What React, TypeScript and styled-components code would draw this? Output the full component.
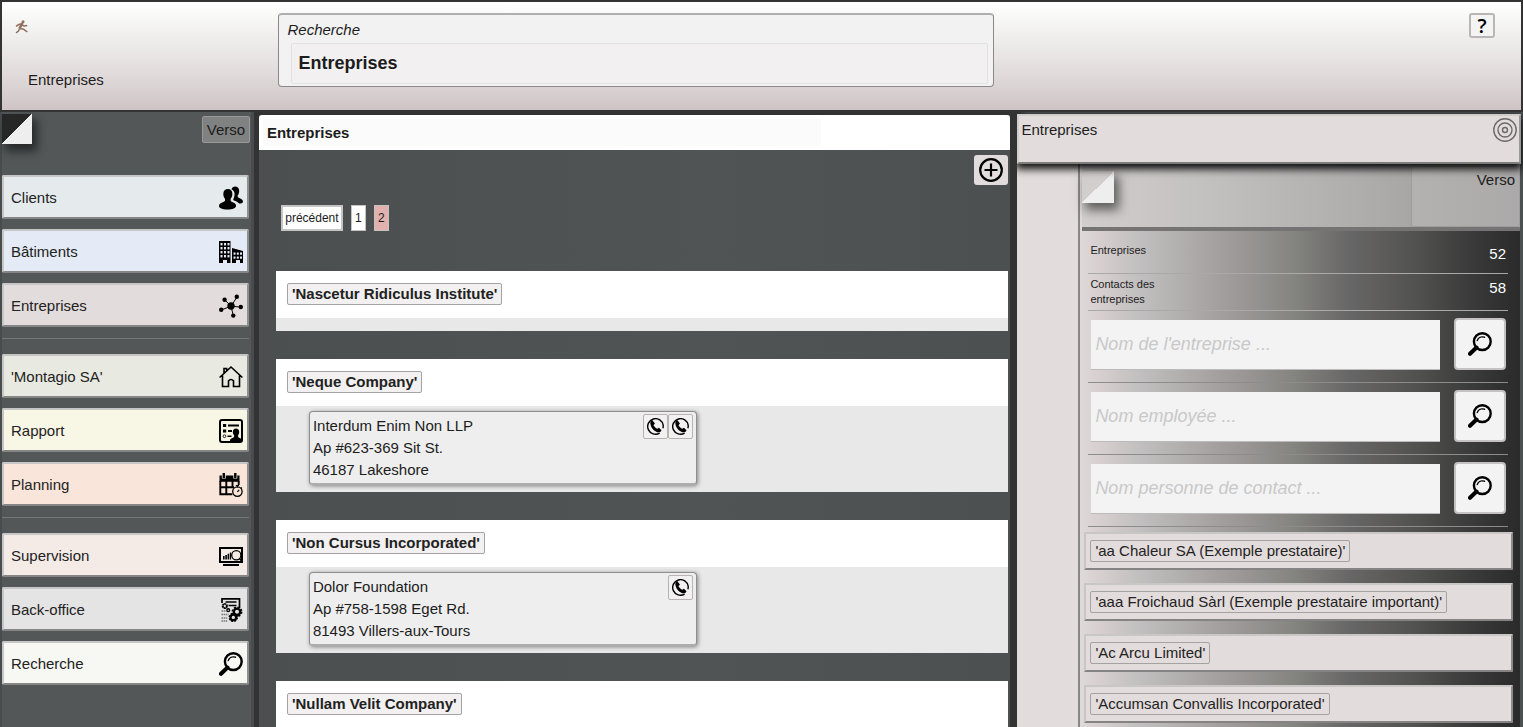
import React from 'react';
import styled, { createGlobalStyle } from 'styled-components';

const GlobalStyle = createGlobalStyle`
  *, *::before, *::after { box-sizing: border-box; }
  body {
    margin: 0;
    background: #333;
    color: #1c1c1c;
    font: 15px/22px "Liberation Sans", Arial, sans-serif;
  }
  button, input { font: inherit; color: inherit; margin: 0; padding: 0; }
  button { cursor: pointer; }
  h1, h2, p, ul, dl, dd { margin: 0; padding: 0; font-size: inherit; font-weight: inherit; }
  ul { list-style: none; }
  svg { display: block; }
`;

const Page = styled.div`
  display: flex;
  flex-direction: column;
  height: 100vh;
  overflow: hidden;
`;

/* ---------- top banner ---------- */

const Banner = styled.header`
  flex: none;
  display: grid;
  grid-template-columns: 18.2% 47.1% 1fr;
  height: 112px;
  border: 2px solid #333;
  background: linear-gradient(#fff, #eeedeb 35%, #e0dada 68%, #cfc4c5);
`;

const Brand = styled.div`
  display: flex;
  flex-direction: column;
  justify-content: space-between;
  padding: 18px 0 19px 13px;
`;

const BrandName = styled.h1`
  padding-left: 13px;
`;

const SearchBox = styled.section`
  margin-top: 11px;
  height: 74px;
  padding: 4px 5px 2px 8px;
  border: 1px solid #8a8888;
  border-top: 2px solid #b0aeae;
  border-radius: 4px;
  background: #f2f2f2;
`;

const SearchTitle = styled.p`
  font-style: italic;
`;

const SearchValue = styled.p`
  margin: 2px 0 0 4px;
  padding: 0 6px;
  border: 1px solid #e4e1e1;
  border-radius: 2px;
  background: #f2f0f0;
  font-size: 18px;
  font-weight: bold;
  line-height: 39px;
`;

const HelpButton = styled.button`
  justify-self: end;
  width: 26px;
  height: 25px;
  margin: 11px 26px 0 0;
  border: 2px solid #bbb6b6;
  border-radius: 3px;
  background: #f5f4f4;
  font: 600 20px/20px "Open Sans", "Noto Sans", sans-serif;
  color: #000;
`;

/* ---------- body columns ---------- */

const Columns = styled.div`
  flex: 1;
  min-height: 0;
  display: grid;
  grid-template-columns: 17% minmax(0, 1fr) 33.2%;
`;

const Sidebar = styled.nav`
  margin-right: 5px;
  padding: 2px 5px 0 2px;
  background: linear-gradient(90deg, #484c4c 2px, #535757 2px, #535757 calc(100% - 3px), #484c4c calc(100% - 3px));
  overflow: hidden;
`;

const SidebarTop = styled.div`
  display: flex;
  justify-content: space-between;
  height: 61px;
`;

const Fold = styled.span<{ $from: string; $size: number }>`
  width: ${p => p.$size}px;
  height: ${p => p.$size}px;
  background: linear-gradient(135deg, ${p => p.$from} 50%, #eee 50%);
  box-shadow: 4px 6px 10px 1px rgba(0, 0, 0, 0.55);
`;

const SideVerso = styled.button`
  width: 48px;
  height: 27px;
  margin: 2px -1px 0 0;
  border: 1px solid #999;
  border-radius: 2px;
  background: #808282;
`;

const NavList = styled.ul`
  display: flex;
  flex-direction: column;
  gap: 10px;
`;

const NavButton = styled.button<{ $tone: string }>`
  display: flex;
  align-items: center;
  justify-content: space-between;
  width: 100%;
  height: 44px;
  padding: 2px 4px 0 7px;
  border: 2px solid;
  border-color: #c6c6c6 #8f8f8f #858585 #c6c6c6;
  border-radius: 2px;
  background: ${p => p.$tone};
  color: #222;
`;

const NavRule = styled.hr`
  margin: 11px 0 15px;
  border: 0;
  border-top: 1px solid #747878;
`;

/* ---------- centre list ---------- */

const Center = styled.main`
  margin: 3px 7px 0 0;
  background: linear-gradient(90deg, #4b4f4f, #505454 60%, #4c5050);
  overflow: hidden;
`;

const CenterTitle = styled.h2`
  height: 35px;
  padding: 4px;
  border-radius: 3px 3px 0 0;
  background: #fff;
  font-weight: bold;
`;

const CenterTitleText = styled.span`
  display: block;
  width: 75%;
  padding: 0 4px;
  background: #fbfbfb;
  line-height: 27px;
`;

const AddRow = styled.div`
  display: flex;
  justify-content: flex-end;
  padding: 5px 2px 0;
`;

const AddButton = styled.button`
  display: grid;
  place-items: center;
  width: 34px;
  height: 30px;
  border: 0;
  border-radius: 3px;
  background: #e2dcdc;
`;

const Pager = styled.nav`
  display: flex;
  gap: 8px;
  padding: 20px 22px 40px;
`;

const PageButton = styled.button<{ $current?: boolean; $wide?: boolean }>`
  height: 26px;
  width: ${p => (p.$wide ? 62 : 15)}px;
  border: ${p => (p.$wide ? 2 : 1)}px solid #c4c4c4;
  background: ${p => (p.$current ? '#e3b1ad' : '#fff')};
  font-size: 12px;
  line-height: 20px;
  white-space: nowrap;
`;

const Companies = styled.ul`
  display: flex;
  flex-direction: column;
  gap: 28px;
  padding: 0 2px 0 17px;
`;

const CompanyHead = styled.div`
  padding: 12px 11px;
  height: 47px;
  background: #fff;
`;

const CompanyBody = styled.div`
  min-height: 13px;
  background: #e8e8e8;
`;

const Tag = styled.button<{ $bold?: boolean }>`
  height: 22px;
  padding: 0 4px;
  border: 1px solid #a5a2a2;
  border-radius: 2px;
  background: ${p => (p.$bold ? '#f2f0f0' : 'transparent')};
  color: #222;
  font-weight: ${p => (p.$bold ? 'bold' : 'normal')};
  line-height: 20px;
  white-space: nowrap;
`;

const AddressWrap = styled.div`
  padding: 5px 33px 7px;
`;

const AddressCard = styled.article`
  display: flex;
  justify-content: space-between;
  width: 388px;
  max-width: 100%;
  height: 74px;
  padding: 3px 3px 0;
  border: 1px solid #8f8f8f;
  border-bottom: 2px solid #adadad;
  border-radius: 4px;
  background: #eee;
  box-shadow: 1px 1px 4px rgba(0, 0, 0, 0.45);
`;

const Phones = styled.div`
  display: flex;
`;

const PhoneButton = styled.button`
  display: grid;
  place-items: center;
  width: 25px;
  height: 25px;
  margin-top: -1px;
  border: 1px solid #b8b2b2;
  border-radius: 2px;
  background: #f2f0f0;
`;

/* ---------- right pane ---------- */

const Pane = styled.aside`
  display: flex;
  flex-direction: column;
  min-height: 0;
  padding: 2px 3px 0 0;
  background: linear-gradient(90deg, #383838, #4b5050 10px);
  overflow: hidden;
`;

const PaneHead = styled.header`
  flex: none;
  position: relative;
  display: flex;
  justify-content: space-between;
  height: 50px;
  margin-right: -1px;
  padding: 3px 2px;
  border: 2px solid;
  border-color: #cfcccc #999 #7d7d7d #cfcccc;
  background: #e2dcdc;
  box-shadow: 0 4px 8px 1px rgba(0, 0, 0, 0.95);
`;

const TargetButton = styled.button`
  width: 24px;
  height: 24px;
  margin-top: -1px;
  border: 0;
  background: none;
`;

const PaneBody = styled.div`
  flex: 1;
  min-height: 0;
  display: grid;
  grid-template-columns: 61px minmax(0, 1fr);
  background: #e2dcdc;
`;

const Sheet = styled.div`
  grid-column: 2;
  border-left: 2px solid #888;
  background: linear-gradient(90deg, #dfd9d9 0%, #d8d0d0 4%, #c0bebe 14%, #a29d9d 33%, #858581 48%, #686767 61%, #525250 76%, #3c3c3c 88%, #2b2a2a 100%);
`;

const SheetHead = styled.div`
  display: flex;
  justify-content: space-between;
  height: 67px;
  margin-left: 2px;
  padding-top: 2px;
  border-bottom: 4px solid #757373;
  background: linear-gradient(90deg, #d3cece, #c2bfbf 30%, #a9a6a6 75%, #aaa7a7);
`;

const SheetFold = styled(Fold)`
  margin-top: 5px;
`;

const SheetVerso = styled.button`
  display: flex;
  justify-content: flex-end;
  width: 25%;
  padding: 2px 4px 0 0;
  border: 1px solid #a09d9d;
  border-radius: 2px;
  background: linear-gradient(90deg, #b3b2b0, #aba9a9);
`;

const Facts = styled.dl`
  margin: 0 12px 0 8px;
`;

const Fact = styled.div<{ $tall?: boolean }>`
  display: flex;
  justify-content: space-between;
  height: ${p => (p.$tall ? 43 : 37)}px;
  padding: ${p => (p.$tall ? 12 : 3)}px 2px 0;
  border-bottom: 1px solid #aaa8a8;
`;

const FactName = styled.dt`
  width: 80px;
  font-size: 11px;
  line-height: 15px;
`;

const FactValue = styled.dd`
  color: #fff;
`;

const Finder = styled.form`
  display: flex;
  justify-content: space-between;
  height: 72px;
  margin: 0 12px 0 8px;
  padding: 7px 2px 0 3px;
  border-bottom: 1px solid #8d8b8b;
`;

const FinderInput = styled.input`
  width: 84%;
  height: 50px;
  margin-top: 2px;
  padding: 0 4px;
  border: 0;
  border-bottom: 1px solid #bbb;
  border-radius: 0;
  background: #f3f3f3;
  font-size: 18px;
  &::placeholder { color: #c8c8c8; font-style: italic; opacity: 1; }
`;

const FinderButton = styled.button`
  display: grid;
  place-items: center;
  width: 52px;
  height: 52px;
  border: 2px solid #c4c2c2;
  border-radius: 4px;
  background: #f3f3f3;
`;

const Results = styled.ul`
  display: flex;
  flex-direction: column;
  gap: 13px;
  padding: 5px 7px 0 4px;
`;

const Result = styled.li`
  display: flex;
  height: 38px;
  padding: 6px 4px;
  border: 2px solid;
  border-color: #c9c6c6 #8c8a8a #858383 #c9c6c6;
  border-radius: 1px;
  background: #e2dcdc;
`;

/* ---------- drawings ---------- */

const Icon = ({ size = 24, box = 24, children }: { size?: number; box?: number; children: React.ReactNode }) => (
  <svg width={size} height={size} viewBox={`0 0 ${box} ${box}`} aria-hidden="true" fill="#000">
    {children}
  </svg>
);

const Runner = () => (
  <svg width="13" height="14" viewBox="0 0 13 14" aria-hidden="true" fill="none" stroke="#8f6f5c" strokeLinejoin="round">
    <circle cx="8" cy="1.700" r="1.500" fill="#8f6f5c" stroke="none" />
    <path d="M7.500 3 4.500 8.500" strokeWidth="2.600" />
    <path d="M6.500 3.800 3.800 4.500 1 6.300M7 5l2.200 1 3-.6M4.800 8.500l4 .8L12.300 12M4.500 8.500l-1 2.500L1 12.800" strokeWidth="1.500" />
  </svg>
);

const ClientsIcon = () => (
  <Icon>
    <path d="M16.200.6c2.400 0 4 1.800 4 4.300 0 1.900-.7 3.500-1.500 4.500-.2 1.300.2 2 1.500 2.500 2.300.8 3.800 1.900 3.800 3.500 0 1.500-1.300 2.100-3.800 2.100-1.800-2.100-4.400-2.500-5.700-3.200-.4-.7-.1-1.500.3-2.200 1.500-3.800 1-7.200-2.300-8.800.6-1.600 1.900-2.700 3.700-2.700z" />
    <path d="M8.900 3.100c2.700 0 4.500 2 4.500 4.800 0 2-.8 3.700-1.700 4.800-.3 1.800 0 2.800 1.500 3.300 2.400.8 3.900 1.800 3.900 3.800 0 2.300-3.500 3.700-8.600 3.700S0 22.200 0 20c0-2 1.800-3.100 4.400-3.900 1.500-.5 1.900-1.500 1.600-3.300-.9-1.100-1.700-2.900-1.700-4.900 0-2.800 1.900-4.800 4.600-4.800z" />
  </Icon>
);

const BuildingsIcon = () => (
  <Icon>
    <path d="M0 1h11.500v22H8v-3H4v3H0zM13 8l11 3v12h-3v-3h-4v3h-4z" />
    <g fill="#e5ecf7">
      {[3, 7, 11, 15].map(y => [1.500, 5, 8.500].map(x => <rect key={`${x}-${y}`} x={x} y={y} width="2" height="2.400" />))}
      {[12.500, 16.500].map(y => [14.500, 17.800, 21].map(x => <rect key={`${x}-${y}`} x={x} y={y} width="2" height="2.200" />))}
    </g>
  </Icon>
);

const NetworkIcon = () => (
  <Icon>
    <path d="M12 12.200 5.500 5.500M12 12.200 18 3M12 12.200l10 .9M12 12.200 2.200 16M12 12.200l2.300 9.300" stroke="#000" strokeWidth="1" />
    <circle cx="12" cy="12" r="3.700" />
    <circle cx="5.600" cy="5.800" r="2.200" />
    <circle cx="17.800" cy="2.800" r="2.200" />
    <circle cx="21.800" cy="13" r="2.200" />
    <circle cx="2.200" cy="15.700" r="2.200" />
    <circle cx="14.300" cy="21.600" r="2.200" />
  </Icon>
);

const HouseIcon = () => (
  <Icon>
    <path
      d="M.6 12.500 12 2l11.400 10.500M3.500 10.500v11h6v-5.700q2.500-2.600 5 0v5.700h6v-11M5 8V3.500h2.600v2"
      fill="none"
      stroke="#000"
      strokeWidth="1.600"
    />
  </Icon>
);

const ReportIcon = () => (
  <Icon>
    <rect x="1" y="1" width="22" height="22" rx="2" fill="none" stroke="#000" strokeWidth="2" />
    <path d="M4 5h3.200v3H4zM4 10.500h3.200v3H4zM9 5.500h11v2H9zM9 11h4v2H9zM8.500 16.500h4V18h-4z" />
    <circle cx="5.500" cy="17.200" r="1.400" fill="none" stroke="#000" strokeWidth=".8" />
    <path d="M17 9.500c1.900 0 3.200 1.500 3.200 3.500 0 1.500-.6 2.700-1.200 3.500 0 1.500.4 2 1.700 2.500 1.500.5 2.500 1 2.500 2.500V23H11v-1.500c0-1.500 1-2 2.500-2.500 1.300-.5 1.700-1 1.700-2.500-.6-.8-1.400-2-1.400-3.500 0-2 1.300-3.500 3.200-3.500z" />
  </Icon>
);

const PlanningIcon = () => (
  <Icon>
    <path d="M.5 2.500h20v6.300H.5z" />
    <path d="M4.800.5v5M16.300.5v5" stroke="#f9e5da" strokeWidth="4" />
    <path d="M4.800 0v5M16.300 0v5" stroke="#000" strokeWidth="2.400" />
    <path d="M1.300 8v13.200h12M1 14.300h14M7.300 8v13M13.500 8v7M19.700 8v4" fill="none" stroke="#000" strokeWidth="1.900" />
    <circle cx="18.400" cy="18.600" r="4.700" fill="#f9e5da" stroke="#000" strokeWidth="1.300" />
    <path d="M18.400 12.600v2M16.800 12.500h3.200M21.800 14.500l1 1M18.400 18.800l1.800-2" stroke="#000" strokeWidth="1.200" />
  </Icon>
);

const MonitorIcon = () => (
  <Icon>
    <path d="M1 4h22v14H1z" fill="none" stroke="#000" strokeWidth="2" />
    <path d="M4 20h16v2H4zM4 12h1.600v3.500H4zM6.300 11h1.600v4.500H6.300zM8.600 9.800h1.600v5.700H8.600zM10.900 8.500h1.200v7h-1.200z" />
    <circle cx="17.300" cy="11.200" r="4.600" fill="#f4ebe6" stroke="#000" strokeWidth="1.300" />
    <path d="m20.500 14.500 3 3.500" stroke="#000" strokeWidth="1.800" />
  </Icon>
);

const BackOfficeIcon = () => (
  <Icon>
    <path d="M3 5V.9h17.500V10M6.500 4h11M9.500 7.500h8" fill="none" stroke="#000" strokeWidth="1.700" />
    <circle cx="5.800" cy="8" r="2.100" fill="none" stroke="#000" strokeWidth="2" strokeDasharray="1.700 .4" />
    <circle cx="9.200" cy="12.200" r="1.400" fill="none" stroke="#000" strokeWidth="1.400" />
    <path d="M2.500 13h5M2.500 16.500h7M2.500 20h6M2.500 23h6" stroke="#777" strokeWidth="1.500" strokeDasharray="1.500 .6" />
    <circle cx="18" cy="13.800" r="3.200" fill="none" stroke="#000" strokeWidth="2.400" />
    <circle cx="18" cy="13.800" r="4.600" fill="none" stroke="#000" strokeWidth="1.700" strokeDasharray="2 1.600" />
    <circle cx="14.300" cy="19.400" r="2.800" fill="#e5e5e5" stroke="#000" strokeWidth="2.200" />
    <circle cx="14.300" cy="19.400" r="4" fill="none" stroke="#000" strokeWidth="1.500" strokeDasharray="1.800 1.350" />
  </Icon>
);

const LensIcon = () => (
  <Icon>
    <circle cx="14.300" cy="9.600" r="8.400" fill="none" stroke="#000" strokeWidth="2.400" />
    <path d="M9.200 8.600c1-3 4-4.500 7.300-3.400" fill="none" stroke="#000" strokeWidth="1.400" strokeLinecap="round" />
    <path d="m8.500 15.500-6.500 6.300" fill="none" stroke="#000" strokeWidth="4" strokeLinecap="round" />
  </Icon>
);

const PlusIcon = () => (
  <Icon>
    <circle cx="12" cy="12" r="10.800" fill="none" stroke="#000" strokeWidth="2.200" />
    <path d="M12 5.500v13M5.500 12h13" stroke="#000" strokeWidth="2.200" />
  </Icon>
);

const PhoneIcon = () => (
  <Icon size={17}>
    <path d="M17.800 21.300A11 11 0 1 1 22.900 10.500c.1 1.500 0 2.600-.5 4" fill="none" stroke="#000" strokeWidth="2" />
    <path d="M5 4.800 7.600 3l3.600 4.700-2 2.500c1 2 3.200 4.200 5.400 5l2.300-1.400 3.600 3.500-1.700 2.400c-3.200 1.200-7-.3-9.800-3.200C6 13.500 3.800 8.500 5 4.800z" />
  </Icon>
);

const TargetIcon = () => (
  <Icon>
    <g fill="none" stroke="#6c6a6a" strokeWidth="1.400">
      <circle cx="12" cy="12" r="11.200" />
      <circle cx="12" cy="12" r="7" />
      <circle cx="12" cy="12" r="2.500" />
    </g>
  </Icon>
);

/* ---------- data ---------- */

type Entry = { label: string; tone: string; icon: React.ReactNode };

const navGroups: Entry[][] = [
  [
    { label: 'Clients', tone: '#e5ebed', icon: <ClientsIcon /> },
    { label: 'Bâtiments', tone: '#e4ebf6', icon: <BuildingsIcon /> },
    { label: 'Entreprises', tone: '#e2dcdc', icon: <NetworkIcon /> },
  ],
  [
    { label: "'Montagio SA'", tone: '#e8e9e1', icon: <HouseIcon /> },
    { label: 'Rapport', tone: '#f8f6e5', icon: <ReportIcon /> },
    { label: 'Planning', tone: '#f9e5da', icon: <PlanningIcon /> },
  ],
  [
    { label: 'Supervision', tone: '#f4ebe6', icon: <MonitorIcon /> },
    { label: 'Back-office', tone: '#e4e4e4', icon: <BackOfficeIcon /> },
    { label: 'Recherche', tone: '#f7f7f3', icon: <LensIcon /> },
  ],
];

const companies = [
  { name: "'Nascetur Ridiculus Institute'" },
  { name: "'Neque Company'", lines: ['Interdum Enim Non LLP', 'Ap #623-369 Sit St.', '46187 Lakeshore'], phones: 2 },
  { name: "'Non Cursus Incorporated'", lines: ['Dolor Foundation', 'Ap #758-1598 Eget Rd.', '81493 Villers-aux-Tours'], phones: 1 },
  { name: "'Nullam Velit Company'" },
];

const finders = ["Nom de l'entreprise ...", 'Nom employée ...', 'Nom personne de contact ...'];

const results = [
  "'aa Chaleur SA (Exemple prestataire)'",
  "'aaa Froichaud Sàrl (Exemple prestataire important)'",
  "'Ac Arcu Limited'",
  "'Accumsan Convallis Incorporated'",
];

export default function App() {
  return (
    <Page>
      <GlobalStyle />
      <Banner>
        <Brand>
          <Runner />
          <BrandName>Entreprises</BrandName>
        </Brand>
        <SearchBox>
          <SearchTitle>Recherche</SearchTitle>
          <SearchValue>Entreprises</SearchValue>
        </SearchBox>
        <HelpButton>?</HelpButton>
      </Banner>

      <Columns>
        <Sidebar>
          <SidebarTop>
            <Fold $from="#272727" $size={30} />
            <SideVerso>Verso</SideVerso>
          </SidebarTop>
          {navGroups.map((group, i) => (
            <React.Fragment key={i}>
              {i > 0 && <NavRule />}
              <NavList>
                {group.map(item => (
                  <li key={item.label}>
                    <NavButton $tone={item.tone}>
                      {item.label}
                      {item.icon}
                    </NavButton>
                  </li>
                ))}
              </NavList>
            </React.Fragment>
          ))}
        </Sidebar>

        <Center>
          <CenterTitle>
            <CenterTitleText>Entreprises</CenterTitleText>
          </CenterTitle>
          <AddRow>
            <AddButton aria-label="Ajouter">
              <PlusIcon />
            </AddButton>
          </AddRow>
          <Pager>
            <PageButton $wide>précédent</PageButton>
            <PageButton>1</PageButton>
            <PageButton $current>2</PageButton>
          </Pager>
          <Companies>
            {companies.map(c => (
              <li key={c.name}>
                <CompanyHead>
                  <Tag $bold>{c.name}</Tag>
                </CompanyHead>
                <CompanyBody>
                  {c.lines && (
                    <AddressWrap>
                      <AddressCard>
                        <div>
                          {c.lines.map(line => (
                            <p key={line}>{line}</p>
                          ))}
                        </div>
                        <Phones>
                          {Array.from({ length: c.phones }, (_, n) => (
                            <PhoneButton key={n} aria-label="Appeler">
                              <PhoneIcon />
                            </PhoneButton>
                          ))}
                        </Phones>
                      </AddressCard>
                    </AddressWrap>
                  )}
                </CompanyBody>
              </li>
            ))}
          </Companies>
        </Center>

        <Pane>
          <PaneHead>
            <h2>Entreprises</h2>
            <TargetButton aria-label="Cibler">
              <TargetIcon />
            </TargetButton>
          </PaneHead>
          <PaneBody>
            <Sheet>
              <SheetHead>
                <SheetFold $from="#d3cece" $size={32} />
                <SheetVerso>Verso</SheetVerso>
              </SheetHead>
              <Facts>
                <Fact $tall>
                  <FactName>Entreprises</FactName>
                  <FactValue>52</FactValue>
                </Fact>
                <Fact>
                  <FactName>Contacts des entreprises</FactName>
                  <FactValue>58</FactValue>
                </Fact>
              </Facts>
              {finders.map(text => (
                <Finder key={text} onSubmit={e => e.preventDefault()}>
                  <FinderInput placeholder={text} aria-label={text} />
                  <FinderButton aria-label="Rechercher">
                    <LensIcon />
                  </FinderButton>
                </Finder>
              ))}
              <Results>
                {results.map(name => (
                  <Result key={name}>
                    <Tag>{name}</Tag>
                  </Result>
                ))}
              </Results>
            </Sheet>
          </PaneBody>
        </Pane>
      </Columns>
    </Page>
  );
}
